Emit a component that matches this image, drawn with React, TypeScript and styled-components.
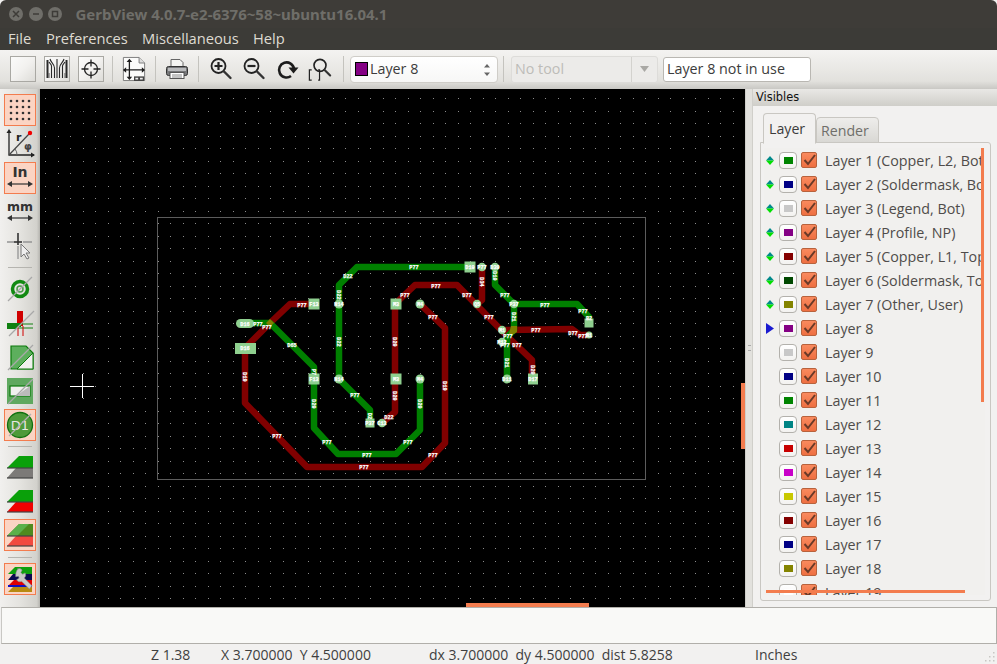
import React from "react";
import styled, { createGlobalStyle } from "styled-components";

const Global = createGlobalStyle`
  html, body { margin: 0; padding: 0; width: 997px; height: 664px; overflow: hidden; background: #f2f1f0; }
  * { box-sizing: border-box; }
  body { font-family: "Open Sans", "Noto Sans", sans-serif; }
`;

const Window = styled.div`
  width: 997px; height: 664px; display: flex; flex-direction: column; overflow: hidden;
  background: #f2f1f0; position: relative;
`;
const TitleBar = styled.div`
  height: 28px; background: #3e3c38; display: flex; align-items: center; padding-left: 9px; flex: none;
  border-radius: 6px 6px 0 0;
`;
const WinBtn = styled.div`
  width: 14px; height: 14px; border-radius: 50%; background: #6f6e69; margin-right: 5.5px;
  display: flex; align-items: center; justify-content: center;
`;
const TitleText = styled.div`
  margin-left: 8px; color: #6f6e69; font: 700 15px "Noto Sans", sans-serif; white-space: nowrap;
`;
const MenuBar = styled.div`
  height: 22px; background: #3c3b37; display: flex; align-items: center; padding-left: 8px; flex: none;
`;
const MenuItem = styled.div<{ $w: number }>`
  width: ${p => p.$w}px; color: #dfdbd2; font: 400 14.7px "Open Sans", sans-serif; white-space: nowrap; margin-top: -3px;
`;
const TopBar = styled.div`
  height: 39px; flex: none; display: flex; align-items: center; padding: 0 0 1px 10px;
  background: linear-gradient(#f4f3f1, #e2e1dd 80%, #c9c8c4);
`;
const ToolBox = styled.div<{ $on?: boolean }>`
  width: 26px; height: 26px; display: flex; align-items: center; justify-content: center; flex: none;
  margin-right: ${p => (p.$on ? 8 : 0)}px;
  border: 1px solid #a9a8a3; background: linear-gradient(135deg, #fbfbfa, #f2f1ef 50%, #dddcd8);
`;
const TopIcon = styled.div<{ $mr?: number }>`
  width: 24px; height: 26px; flex: none; display: flex; align-items: center; justify-content: center;
  margin-right: ${p => p.$mr ?? 0}px;
`;
const TopSep = styled.div<{ $l: number; $r: number }>`
  width: 1px; height: 26px; background: #c4c3be; flex: none; margin: 0 ${p => p.$r}px 0 ${p => p.$l}px;
`;
const Combo = styled.div`
  width: 148px; height: 27px; flex: none; display: flex; align-items: center; padding: 0 0 1px 4px; position: relative;
  background: linear-gradient(#fff, #f7f7f6); border: 1px solid #cfcdc8; border-radius: 4px;
  font: 400 14.3px "Open Sans", sans-serif; color: #3c3c3c;
`;
const Swatch = styled.div`
  width: 13px; height: 14px; background: #840084; border: 1px solid #000; margin-right: 2px; flex: none;
`;
const Spinner = styled.svg`
  position: absolute; right: 6px; top: 7px;
`;
const DisabledCombo = styled.div`
  width: 147px; height: 27px; flex: none; display: flex; margin-left: 7px; 
  font: 400 14.3px "Open Sans", sans-serif; color: #bdbcb8;
  background: #ecebe9; border: 1px solid #dddcd9; border-radius: 3px;
`;
const DisabledField = styled.div`
  flex: 1; display: flex; align-items: center; padding: 0 0 1px 3px; border-right: 1px solid #d3d2ce;
`;
const DisabledArrow = styled.div`
  width: 25px; display: flex; align-items: center; justify-content: center;
`;
const TextField = styled.div`
  width: 148px; height: 25px; margin-left: 5px; flex: none; background: #fff; border: 1px solid #b9b7b2; border-radius: 3px;
  display: flex; align-items: center; padding: 0 0 1px 3px; font: 400 14.3px "Open Sans", sans-serif; color: #3c3c3c;
`;
const Main = styled.div`
  height: 518px; flex: none; display: flex; min-height: 0;
`;
const LeftBar = styled.div`
  width: 40px; flex: none; display: flex; flex-direction: column; align-items: center; padding: 5px 0 0 0;
  background: linear-gradient(90deg, #f1f0ee, #e4e3df 50%, #d2d1cc 92%, #b4b3ae);
`;
const LeftBtn = styled.div<{ $on?: boolean }>`
  width: 32px; height: 32px; flex: none; margin-bottom: 2px; display: flex; align-items: center; justify-content: center;
  border: 1px solid ${p => (p.$on ? "#f37c4e" : "transparent")};
  background: ${p => (p.$on ? "#fbd4c3" : "transparent")};
`;
const LeftSep = styled.div<{ $t: number; $b: number }>`
  width: 24px; height: 1px; flex: none; background: #b5b4af; margin: ${p => p.$t}px 0 ${p => p.$b}px;
`;
const CanvasWrap = styled.div`
  width: 705px; flex: none; background: #000; position: relative; overflow: hidden;
`;
const CanvasSvg = styled.svg`
  display: block;
`;
const HScroll = styled.div`
  position: absolute; left: 426px; bottom: 0; width: 123px; height: 4px; background: #f37c4e;
`;
const VScroll = styled.div`
  position: absolute; right: 0; top: 294px; width: 4px; height: 66px; background: #f37c4e;
`;
const Splitter = styled.div`
  width: 7px; flex: none; background: #e2e1dd; border-left: 1px solid #cfcec9; display: flex; align-items: center; justify-content: center;
`;
const Grip = styled.div`
  width: 3px; height: 6px; border-top: 1px solid #aaa; border-bottom: 1px solid #aaa;
`;
const RightPanel = styled.div`
  flex: 1; min-width: 0; min-height: 0; display: flex; flex-direction: column; border-left: 1px solid #d0cfca;
`;
const PanelHead = styled.div`
  height: 17px; flex: none; padding: 0 0 1px 3px; display: flex; align-items: center;
  background: linear-gradient(#e9e8e5, #cfcec9);
  font: 400 11.4px "DejaVu Sans", sans-serif; color: #111;
`;
const PanelBody = styled.div`
  flex: 1; min-height: 0; display: flex; flex-direction: column; padding: 7px 6px 6px 6px; background: #f2f1f0;
`;
const TabRow = styled.div`
  height: 30px; flex: none; display: flex; align-items: flex-end; padding-left: 4px; position: relative; z-index: 1;
`;
const Tab = styled.div<{ $on?: boolean }>`
  width: ${p => (p.$on ? 53 : 63)}px; height: ${p => (p.$on ? 31 : 26)}px; flex: none; display: flex; align-items: center;
  padding-left: ${p => (p.$on ? 5 : 4)}px;
  padding-top: ${p => (p.$on ? 0 : 1)}px;
  border: 1px solid #c9c7c2; border-radius: 4px 4px 0 0; font: 400 14.2px "Open Sans", sans-serif;
  color: ${p => (p.$on ? "#3c3c3c" : "#6f6e6a")};
  background: ${p => (p.$on ? "#f2f1f0" : "linear-gradient(#eeedeb, #d9d8d4)")};
  border-bottom: ${p => (p.$on ? "1px solid #f2f1f0" : "1px solid #c9c7c2")};
  margin-bottom: ${p => (p.$on ? -1 : 0)}px;
`;
const Pane = styled.div`
  flex: 1; min-height: 0; border: 1px solid #c9c7c2; border-radius: 0 3px 3px 3px; padding: 5px 5px 5px 3px; margin: -1px 0 0 1px;
`;
const List = styled.div`
  height: 100%; position: relative; overflow: hidden; background: #f1f0ee;
  display: flex; flex-direction: column;
`;
const Row = styled.div`
  height: 24px; flex: none; display: flex; align-items: center; white-space: nowrap;
`;
const Marker = styled.div`
  width: 12px; height: 10px; flex: none; display: flex; align-items: center; justify-content: center;
`;
const ColorBtn = styled.div`
  width: 18px; height: 17px; flex: none; border: 1px solid #b3b1ac; border-radius: 4px; background: linear-gradient(#fff, #f3f2f0);
  display: flex; align-items: center; justify-content: center; margin-left: 3px;
`;
const Chip = styled.div<{ $c: string }>`
  width: 9px; height: 7px; background: ${p => p.$c};
`;
const Check = styled.div`
  width: 16px; height: 16px; flex: none; margin-left: 4px; border-radius: 2px; border: 1px solid #b8623c;
  background: linear-gradient(#f98a5e, #ee6f41); display: flex; align-items: center; justify-content: center;
`;
const LayerName = styled.div`
  margin-left: 8px; font: 400 14.3px "Open Sans", sans-serif; color: #4f4c4a; width: 156px; overflow: hidden;
`;
const ListV = styled.div`
  position: absolute; left: 217px; top: 0; width: 3px; height: 254px; background: #f37c4e;
`;
const ListH = styled.div`
  position: absolute; left: 2px; bottom: 2px; width: 199px; height: 3px; background: #f37c4e;
`;
const Msg = styled.div`
  height: 37px; flex: none; margin: 0 0 0 1px; background: #f9f9f7; border: 1px solid #b1afaa; width: 996px;
  border-left-color: #c9c8c4;
`;
const Status = styled.div`
  flex: 1; display: flex; align-items: center; padding-top: 1px; font: 400 14px "Open Sans", sans-serif; color: #3f3f3f; white-space: nowrap;
`;
const Field = styled.div<{ $w: number }>`
  width: ${p => p.$w}px; flex: none;
`;
const Resize = styled.svg`
  position: absolute; right: 1px; bottom: 1px;
`;

/* ---------- top icons ---------- */
const TracksIcon = () => (
  <svg width="24" height="24" viewBox="0 0 24 24" fill="none" stroke="#2a2a2a" strokeWidth="1.100">
    <path d="M2.500 3v18M21.500 3v18" strokeWidth="2" />
    <path d="M9.500 11v10M12 8v13M14.500 11v10M6.500 21V9M17.500 21V9" />
    <path d="M9.500 11C9.500 7 6 6 5 2M14.500 11c0-4 3.500-5 4.500-9M12 8V2" />
    <path d="M6.500 9C6.500 7 4.500 6 4 5M17.500 9c0-2 2-3 2.500-4" />
    <path d="M4 21v-5M20 21v-5" stroke="#666" />
  </svg>
);
const TargetIcon = () => (
  <svg width="22" height="22" viewBox="0 0 22 22" fill="none" stroke="#222" strokeWidth="1.300">
    <circle cx="11" cy="11" r="6.500" />
    <path d="M11 1.500v7M11 13.500v7M1.500 11h7M13.500 11h7" />
  </svg>
);
const PageIcon = () => (
  <svg width="26" height="28" viewBox="0 0 26 28">
    <path d="M1.500 1.500h17l6 6v19h-23z" fill="#fbfbfa" stroke="#777" />
    <path d="M18.500 1.500v6h6" fill="#ddd" stroke="#777" />
    <path d="M8 5v19M2 15h21" stroke="#1d1d1d" strokeWidth="1.400" fill="none" />
    <path d="M8 3l-3 3.500h6zM8 26l-3-3.500h6zM1 15l3.500-3v6zM25 15l-3.500-3v6z" fill="#1d1d1d" />
    <rect x="13" y="22" width="11" height="5" fill="#444" />
    <path d="M14.500 23.500h3v2h-3zM19.500 23.500h3v2h-3z" fill="#eee" />
  </svg>
);
const PrinterIcon = () => (
  <svg width="24" height="24" viewBox="0 0 24 24">
    <path d="M6 2.500h9l3 3v5H6z" fill="#f4f4f2" stroke="#666" />
    <rect x="1.500" y="9.500" width="21" height="9" rx="2" fill="#77787a" stroke="#333" />
    <rect x="3" y="11" width="18" height="3" fill="#b9babc" />
    <rect x="5" y="15.500" width="14" height="6" fill="#fff" stroke="#555" />
    <path d="M7 18h10M7 20h10" stroke="#888" />
  </svg>
);
const Mag = ({ children }: { children?: React.ReactNode }) => (
  <svg width="24" height="24" viewBox="0 0 24 24" fill="none">
    <circle cx="9.500" cy="9" r="7" fill="#e8e8e6" stroke="#222" strokeWidth="1.800" />
    <path d="M15 14.500l6.500 6.500" stroke="#333" strokeWidth="2.400" strokeLinecap="round" />
    {children}
  </svg>
);
const RedrawIcon = () => (
  <svg width="24" height="24" viewBox="0 0 24 24" fill="none">
    <path d="M19 12a7.500 7.500 0 1 0-3 7" stroke="#1c1c1c" strokeWidth="2.600" />
    <path d="M13.500 10.500h10l-5 6z" fill="#1c1c1c" />
  </svg>
);
const ZoomSelIcon = () => (
  <svg width="26" height="26" viewBox="0 0 26 26" fill="none">
    <circle cx="13" cy="9" r="6.500" stroke="#222" strokeWidth="1.800" />
    <path d="M18 14l6 6" stroke="#333" strokeWidth="2.300" strokeLinecap="round" />
    <path d="M4 14H1.500v11H4M11 14h1.500v11H11" stroke="#222" strokeWidth="1.300" />
  </svg>
);

/* ---------- left icons ---------- */
const GridIcon = () => (
  <svg width="26" height="26" viewBox="0 0 26 26" fill="#333">
    {[0, 1, 2, 3].flatMap(r => [0, 1, 2, 3].map(c => <circle key={`${r}${c}`} cx={4 + c * 6} cy={4 + r * 6} r="1.300" />))}
  </svg>
);
const PolarIcon = () => (
  <svg width="30" height="30" viewBox="0 0 30 30" fill="none">
    <path d="M4 2v24h25" stroke="#222" strokeWidth="1.300" />
    <path d="M4 0l-2.500 4h5zM30 26l-4-2.500v5z" fill="#222" />
    <path d="M4 26L24 5" stroke="#444" strokeWidth="1.200" />
    <circle cx="25" cy="4" r="2.200" fill="#f00000" />
    <path d="M12 26a9 9 0 0 0-2-6" stroke="#666" />
    <text x="11" y="12" fontFamily="DejaVu Sans" fontWeight="700" fontSize="11" fill="#222">r</text>
    <text x="19" y="21" fontFamily="DejaVu Sans" fontWeight="700" fontSize="10" fill="#444">φ</text>
  </svg>
);
const UnitIcon = ({ t, s }: { t: string; s: number }) => (
  <svg width="30" height="30" viewBox="0 0 30 30" fill="none">
    <text x="15" y="14" textAnchor="middle" fontFamily="DejaVu Sans" fontWeight="700" fontSize={s} fill="#333">{t}</text>
    <path d="M4 21h22" stroke="#333" strokeWidth="1.200" />
    <path d="M2 21l5-3v6zM28 21l-5-3v6z" fill="#333" />
  </svg>
);
const CursorIcon = () => (
  <svg width="28" height="28" viewBox="0 0 28 28" fill="none">
    <path d="M12 1v12" stroke="#333" strokeWidth="1.600" />
    <path d="M1 10h7" stroke="#999" strokeWidth="1.600" />
    <path d="M8 10h8" stroke="#333" strokeWidth="1.600" />
    <path d="M17 10h9" stroke="#999" strokeWidth="1.600" />
    <path d="M12 14v13" stroke="#aaa" strokeWidth="1.800" />
    <path d="M15 12v13l3-3 3 5 2-1-3-5h4z" fill="#eee" stroke="#777" />
  </svg>
);
const ViaIcon = () => (
  <svg width="28" height="28" viewBox="0 0 28 28" fill="none">
    <circle cx="14" cy="14" r="7.500" stroke="#128a12" strokeWidth="3.500" />
    <circle cx="14" cy="14" r="3" stroke="#4a9a4a" strokeWidth="1.500" />
    <path d="M2 26L26 2" stroke="#a8a8a8" strokeWidth="1.300" />
  </svg>
);
const TraceIcon = () => (
  <svg width="30" height="28" viewBox="0 0 30 28" fill="none">
    <rect x="12" y="2" width="6" height="15" fill="#d00000" />
    <rect x="2" y="14" width="10" height="6" fill="#108010" />
    <rect x="12" y="14" width="4" height="4" fill="#108010" />
    <path d="M2 15h26M2 19h26" stroke="#108010" strokeWidth="1" />
    <path d="M13 17v10M18 17v10" stroke="#d00000" />
    <path d="M4 27L29 2" stroke="#a8a8a8" strokeWidth="1.300" />
  </svg>
);
const PolyIcon = () => (
  <svg width="30" height="28" viewBox="0 0 30 28">
    <path d="M6 3h15l7 7v16H6z" fill="#5daf5d" stroke="#0c7a0c" strokeWidth="1.200" />
    <path d="M28 10v16H12z" fill="#f0f0ee" stroke="#0c7a0c" />
    <path d="M3 27L28 2" stroke="#a8a8a8" strokeWidth="1.300" />
  </svg>
);
const RectIcon = () => (
  <svg width="28" height="28" viewBox="0 0 28 28">
    <rect x="1" y="1" width="26" height="26" fill="#5fa85f" />
    <rect x="4" y="9" width="20" height="10" fill="#f0f0ee" stroke="#0c7a0c" strokeWidth="1.200" />
    <path d="M24 9v10H10z" fill="#bbb" />
    <path d="M2 27L27 2" stroke="#a8a8a8" strokeWidth="1.300" />
  </svg>
);
const DCodeIcon = () => (
  <svg width="28" height="28" viewBox="0 0 28 28">
    <circle cx="14" cy="14" r="12.500" fill="#4e9a3a" stroke="#0f700f" strokeWidth="1.300" />
    <text x="14" y="19" textAnchor="middle" fontFamily="DejaVu Sans" fontSize="13" fill="#e8e8e4">D1</text>
    <path d="M3 25L25 3" stroke="#b0b0b0" strokeWidth="1.300" />
  </svg>
);
const Stack = ({ a, b, a2 }: { a: string; b: string; a2?: string }) => (
  <svg width="28" height="28" viewBox="0 0 28 28">
    <path d="M1 25l9-10h17v10z" fill={b} />
    <path d="M1 15L13 3h14v12z" fill={a} />
    {a2 && <path d="M1 15L13 3h10L11 15z" fill={a2} />}
    <path d="M1 15h26" stroke="#444" strokeWidth="1.200" />
    <path d="M1 25h26" stroke="#444" strokeWidth="1.200" />
  </svg>
);
const ToolsIcon = () => (
  <svg width="30" height="30" viewBox="0 0 30 30">
    <path d="M3 10l7-7h17v7z" fill="#0ea00e" />
    <path d="M3 16l5-6h19v6z" fill="#0a0a50" />
    <path d="M3 22l6-6h18v6z" fill="#e00000" />
    <path d="M3 22h24" stroke="#1010c0" strokeWidth="2" />
    <path d="M3 28l5-5h19v5z" fill="#b88a10" />
    <path d="M13 6a5 5 0 0 1 6 1l-1.500 3 2 2 3-1.500c1 2 1 4-1 6l9 9-3 4-9-9c-3 1-5 0-6-2l3-2-1-2-3 .5c-.5-3 .5-7 2.500-9z" fill="#c9c9c6" stroke="#8a8a88" strokeWidth=".7" transform="translate(1 0) scale(.85)" />
  </svg>
);

/* ---------- canvas ---------- */
type P = [number, number];
const red: P[][] = [
  [[245, 348], [245, 403], [307, 467], [422, 467], [445, 443], [445, 328], [420, 304]],
  [[245, 348], [270, 323], [290, 304], [314, 304]],
  [[382, 423], [395, 412], [395, 304], [415, 285], [457, 285], [508, 337], [532, 360], [532, 379]],
  [[482, 267], [482, 300], [477, 304]],
  [[502, 330], [572, 329], [580, 335], [589, 335]],
];
const green: P[][] = [
  [[339, 379], [339, 285], [357, 267], [470, 267]],
  [[339, 379], [370, 410], [370, 423]],
  [[245, 323], [270, 323], [314, 367], [314, 428], [338, 454], [396, 454], [420, 430], [420, 379]],
  [[495, 267], [495, 285], [514, 304], [577, 304], [589, 317], [589, 323]],
  [[514, 304], [514, 330], [507, 337], [507, 379]],
];
const rects: [number, number, number, number][] = [
  [245.5, 348.5, 21, 11], [314, 304, 11, 11], [396, 304, 11, 11], [314, 379, 11, 11], [396, 379, 11, 11],
  [370, 423, 9, 9], [470, 267, 11, 11], [589, 323, 9, 9], [533, 379, 10, 11],
];
const circles: [number, number, number][] = [
  [339, 304, 4.5], [420, 304, 4.5], [339, 379, 4.5], [420, 379, 4.5], [382, 423, 4.2], [482, 267, 4.2], [495, 267, 4.2],
  [477, 304, 4.2], [514, 304, 4.2], [589, 335, 3.5], [502, 330, 4.2], [502, 342, 4.2], [507, 379, 4.5],
];
const labels: [number, number, string, number?][] = [
  [302, 305, "P77"], [245, 348, "D16"], [245, 324, "D16"], [258, 324, "P77"], [267, 327, "P77"], [292, 345, "D65"],
  [314, 304, "F13"], [314, 379, "F13"], [314, 372, "P7", 90], [314, 404, "D20", 90], [327, 442, "P77"], [367, 455, "P77"],
  [408, 442, "P77"], [420, 404, "D20", 90], [420, 304, "M4"], [420, 379, "M4"], [339, 304, "N14"], [339, 379, "N14"],
  [339, 295, "D22", 90], [339, 342, "D22", 90], [348, 276, "D22"], [414, 267, "P77"], [355, 395, "P77"], [370, 416, "D2", 90],
  [370, 423, "P37"], [382, 423, "C13"], [389, 417, "D22"], [395, 396, "D20", 90], [395, 342, "D20", 90], [396, 304, "M3"],
  [396, 379, "M3"], [405, 295, "P77"], [436, 286, "P77"], [433, 317, "P77"], [445, 386, "D19", 90], [433, 455, "P77"],
  [364, 467, "P77"], [277, 436, "P77"], [245, 377, "D19", 90], [470, 267, "D10"], [482, 267, "P77"], [495, 267, "D39"],
  [495, 276, "D10", 90], [482, 282, "D34", 90], [467, 295, "D77"], [505, 295, "P77"], [514, 304, "P37"], [545, 305, "P77"],
  [583, 311, "P77"], [589, 318, "B2"], [514, 317, "D21", 90], [489, 317, "P77"], [536, 330, "P77"], [573, 333, "D77"],
  [583, 336, "P77"], [508, 336, "P77"], [505, 345, "P77"], [517, 345, "D77"], [507, 363, "D21", 90], [533, 370, "D20", 90],
  [507, 379, "D11"], [533, 379, "D17"], [502, 330, "M1"], [502, 342, "M12"], [589, 335, "N1"], [477, 304, "Q5"],
];
const pts = (a: P[]) => a.map(p => p.join(",")).join(" ");
let dots = "";
for (let x = 45; x < 745; x += 12.5)
  for (let y = 98; y < 607; y += 12.5) dots += `M${Math.round(x)} ${Math.round(y)}h1v1h-1z`;

const Board = () => (
  <CanvasSvg width="705" height="518" viewBox="40 89 705 518">
    <path d={dots} fill="#8c8c8c" />
    <rect x="157.5" y="217.5" width="488" height="262" fill="none" stroke="#5c5c5c" shapeRendering="crispEdges" />
    {red.map((l, i) => <polyline key={i} points={pts(l)} fill="none" stroke="#800000" strokeWidth="6.500" strokeLinejoin="round" />)}
    {green.map((l, i) => <polyline key={i} points={pts(l)} fill="none" stroke="#008000" strokeWidth="6.500" strokeLinejoin="round" />)}
    <path d="M270 319l4 4-4 4-4-4z" fill="#808000" />
    <path d="M511 326h6v6l-3 2h-5z" fill="#808000" />
    <rect x="236" y="319" width="18" height="9" rx="4.500" fill="#8fd08f" />
    {rects.map(([x, y, w, h], i) => <rect key={i} x={x - w / 2} y={y - h / 2} width={w} height={h} fill="#8fd08f" />)}
    {circles.map(([x, y, r], i) => <circle key={i} cx={x} cy={y} r={r} fill="#8fd08f" />)}
    {labels.map(([x, y, t, rot], i) => (
      <text key={i} x={x} y={y + 1.800} textAnchor="middle" fontFamily="Liberation Mono" fontWeight="700" fontSize="5.200" fill="#fff" stroke="#fff" strokeWidth="0.250"
        transform={rot ? `rotate(${rot} ${x} ${y})` : undefined}>{t}</text>
    ))}
    <path d="M82 374v24M70 386h24" stroke="#fff" strokeWidth="1" shapeRendering="crispEdges" />
  </CanvasSvg>
);

/* ---------- data ---------- */
const layers: [string, string, ("g" | "b")?][] = [
  ["Layer 1 (Copper, L2, Bot)", "#008400", "g"], ["Layer 2 (Soldermask, Bot)", "#000084", "g"], ["Layer 3 (Legend, Bot)", "#c8c8c8", "g"],
  ["Layer 4 (Profile, NP)", "#840084", "g"], ["Layer 5 (Copper, L1, Top)", "#840000", "g"], ["Layer 6 (Soldermask, Top)", "#004800", "g"],
  ["Layer 7 (Other, User)", "#848400", "g"], ["Layer 8", "#840084", "b"], ["Layer 9", "#c8c8c8"], ["Layer 10", "#000084"],
  ["Layer 11", "#008400"], ["Layer 12", "#008484"], ["Layer 13", "#c80000"], ["Layer 14", "#c800c8"], ["Layer 15", "#c8c800"],
  ["Layer 16", "#840000"], ["Layer 17", "#000084"], ["Layer 18", "#848400"], ["Layer 19", "#ffffff"],
];
const Diamond = () => (
  <svg width="8" height="9" viewBox="0 0 8 9">
    <path d="M4 0l4 4.500H0z" fill="#008a8a" /><path d="M4 9l4-4.500H0z" fill="#00e000" />
  </svg>
);
const Pointer = () => (
  <svg width="8" height="11" viewBox="0 0 8 11"><path d="M0 0l8 5.500L0 11z" fill="#1a1ad0" /></svg>
);

const WinGlyph = ({ d }: { d: string }) => (
  <svg width="8" height="8" viewBox="0 0 8 8" fill="none" stroke="#3e3c38" strokeWidth="1.500"><path d={d} /></svg>
);

export default function App() {
  return (
    <Window>
      <Global />
      <TitleBar>
        <WinBtn><WinGlyph d="M1 1l6 6M7 1L1 7" /></WinBtn>
        <WinBtn><WinGlyph d="M1 4h6" /></WinBtn>
        <WinBtn><WinGlyph d="M1.500 1.500h5v5h-5z" /></WinBtn>
        <TitleText>GerbView 4.0.7-e2-6376~58~ubuntu16.04.1</TitleText>
      </TitleBar>
      <MenuBar>
        <MenuItem $w={38}>File</MenuItem>
        <MenuItem $w={96}>Preferences</MenuItem>
        <MenuItem $w={111}>Miscellaneous</MenuItem>
        <MenuItem $w={40}>Help</MenuItem>
      </MenuBar>
      <TopBar>
        <ToolBox $on />
        <ToolBox $on><TracksIcon /></ToolBox>
        <ToolBox><TargetIcon /></ToolBox>
        <TopSep $l={8} $r={9} />
        <TopIcon><PageIcon /></TopIcon>
        <TopSep $l={9} $r={9} />
        <TopIcon><PrinterIcon /></TopIcon>
        <TopSep $l={9} $r={10} />
        <TopIcon $mr={9}><Mag><path d="M5.500 9h8M9.500 5v8" stroke="#222" strokeWidth="2.200" /></Mag></TopIcon>
        <TopIcon $mr={9}><Mag><path d="M5.500 9h8" stroke="#222" strokeWidth="2.200" /></Mag></TopIcon>
        <TopIcon $mr={9}><RedrawIcon /></TopIcon>
        <TopIcon><ZoomSelIcon /></TopIcon>
        <TopSep $l={11} $r={6} />
        <Combo>
          <Swatch />Layer 8
          <Spinner width="8" height="12" viewBox="0 0 8 12"><path d="M4 0l3 3.500H1zM4 12l3-3.500H1z" fill="#666" /></Spinner>
        </Combo>
        <TopSep $l={5} $r={0} />
        <DisabledCombo>
          <DisabledField>No tool</DisabledField>
          <DisabledArrow><svg width="9" height="6" viewBox="0 0 9 6"><path d="M0 0h9L4.500 6z" fill="#a9a8a4" /></svg></DisabledArrow>
        </DisabledCombo>
        <TextField>Layer 8 not in use</TextField>
      </TopBar>
      <Main>
        <LeftBar>
          <LeftBtn $on><GridIcon /></LeftBtn>
          <LeftBtn><PolarIcon /></LeftBtn>
          <LeftBtn $on><UnitIcon t="In" s={14} /></LeftBtn>
          <LeftBtn><UnitIcon t="mm" s={12.500} /></LeftBtn>
          <LeftBtn><CursorIcon /></LeftBtn>
          <LeftSep $t={3} $b={5} />
          <LeftBtn><ViaIcon /></LeftBtn>
          <LeftBtn><TraceIcon /></LeftBtn>
          <LeftBtn><PolyIcon /></LeftBtn>
          <LeftBtn><RectIcon /></LeftBtn>
          <LeftBtn $on><DCodeIcon /></LeftBtn>
          <LeftSep $t={3} $b={4} />
          <LeftBtn><Stack a="#0aa00a" b="#7c7a78" /></LeftBtn>
          <LeftBtn><Stack a="#0aa00a" b="#f00000" /></LeftBtn>
          <LeftBtn $on><Stack a="#4f8a1e" a2="#5cb04a" b="#f24a40" /></LeftBtn>
          <LeftSep $t={4} $b={5} />
          <LeftBtn $on><ToolsIcon /></LeftBtn>
        </LeftBar>
        <CanvasWrap>
          <Board />
          <HScroll />
          <VScroll />
        </CanvasWrap>
        <Splitter><Grip /></Splitter>
        <RightPanel>
          <PanelHead>Visibles</PanelHead>
          <PanelBody>
            <TabRow>
              <Tab $on>Layer</Tab>
              <Tab>Render</Tab>
            </TabRow>
            <Pane>
              <List>
                {layers.map(([n, c, m]) => (
                  <Row key={n}>
                    <Marker>{m === "g" ? <Diamond /> : m === "b" ? <Pointer /> : null}</Marker>
                    <ColorBtn><Chip $c={c} /></ColorBtn>
                    <Check>
                      <svg width="13" height="12" viewBox="0 0 13 12" fill="none"><path d="M1.500 6l3.500 4L12 1" stroke="#6a3a28" strokeWidth="2" /></svg>
                    </Check>
                    <LayerName>{n}</LayerName>
                  </Row>
                ))}
                <ListV />
                <ListH />
              </List>
            </Pane>
          </PanelBody>
        </RightPanel>
      </Main>
      <Msg />
      <Status>
        <Field $w={151} />
        <Field $w={70}>Z 1.38</Field>
        <Field $w={208}>X 3.700000&nbsp; Y 4.500000</Field>
        <Field $w={326}>dx 3.700000&nbsp; dy 4.500000&nbsp; dist 5.8258</Field>
        <Field $w={60}>Inches</Field>
      </Status>
      <Resize width="12" height="12" viewBox="0 0 12 12" fill="#c8c7c3">
        <path d="M9 1h1.500v1.500H9zM5 5h1.500v1.500H5zM9 5h1.500v1.500H9zM1 9h1.500v1.500H1zM5 9h1.500v1.500H5zM9 9h1.500v1.500H9z" />
      </Resize>
    </Window>
  );
}
